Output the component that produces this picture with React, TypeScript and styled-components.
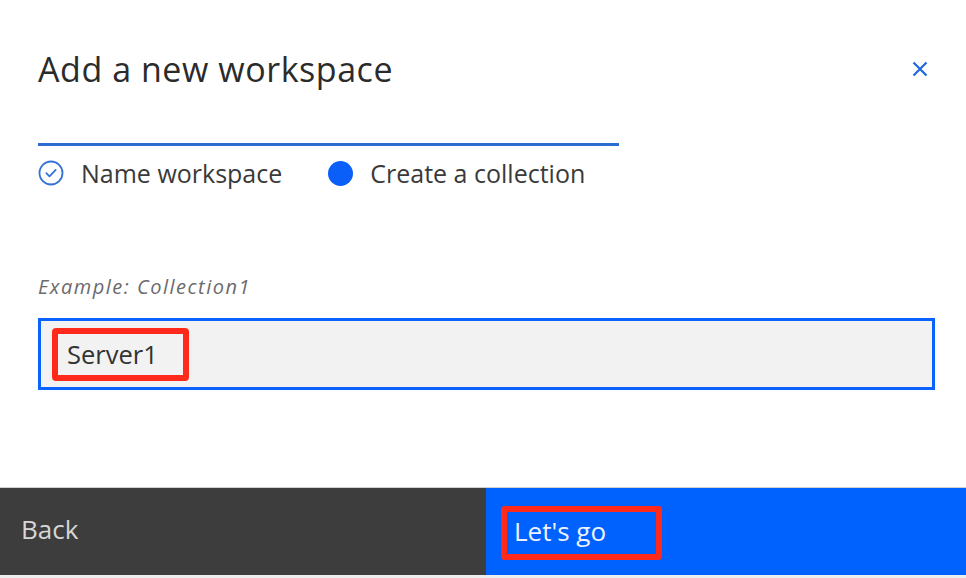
import React from "react";
import styled, { createGlobalStyle } from "styled-components";

const Global = createGlobalStyle`
  html, body { margin: 0; padding: 0; background: #ffffff; }
  body { font-family: "Open Sans", "Noto Sans", sans-serif; }
`;

const Modal = styled.div`
  width: 966px;
  height: 578px;
  display: flex;
  flex-direction: column;
  background: #ffffff;
  overflow: hidden;
`;

const Header = styled.header`
  height: 138px;
  padding: 0 38px;
  display: flex;
  align-items: center;
  justify-content: space-between;
  box-sizing: border-box;
`;

const Title = styled.h2`
  margin: 0;
  font-size: 34px;
  font-weight: 400;
  color: #2b2b2b;
  letter-spacing: 0.55px;
`;

const CloseButton = styled.button`
  border: 0;
  background: transparent;
  padding: 0;
  margin-right: -1px;
  width: 18px;
  height: 18px;
  display: flex;
  align-items: center;
  justify-content: center;
  color: #1f66e0;
  cursor: pointer;
`;

const Body = styled.section`
  flex: 1;
  padding: 0 31px 0 38px;
  display: flex;
  flex-direction: column;
`;

const Progress = styled.div`
  width: 581px;
  display: flex;
  flex-direction: column;
  margin-top: 5px;
`;

const Track = styled.div`
  height: 3px;
  background: #2a6ccf;
`;

const Steps = styled.ol`
  list-style: none;
  margin: 13px 0 0;
  padding: 0;
  display: flex;
  gap: 46px;
`;

const Step = styled.li`
  display: flex;
  align-items: center;
  gap: 17px;
  font-size: 25px;
  color: #3a3a3a;
  height: 28px;
`;

const Dot = styled.span`
  width: 25px;
  height: 25px;
  border-radius: 50%;
  background: #0a5ff8;
  display: block;
`;

const Field = styled.div`
  margin-top: 86px;
  display: flex;
  flex-direction: column;
  gap: 18px;
`;

const Label = styled.label`
  font-size: 20px;
  font-style: italic;
  color: #6b6b6b;
  letter-spacing: 1.5px;
`;

const InputBox = styled.div`
  height: 72px;
  box-sizing: border-box;
  border: 3px solid #0a62ff;
  background: #f2f2f2;
  display: flex;
  align-items: center;
  padding-left: 11px;
`;

const Marked = styled.span<{ $pad: string }>`
  display: inline-flex;
  align-items: center;
  border: 6px solid #ff2a1c;
  border-radius: 4px;
  padding: ${(p) => p.$pad};
  box-sizing: border-box;
`;

const InputText = styled.span`
  font-size: 25.5px;
  color: #333333;
`;

const Footer = styled.footer`
  height: 91px;
  display: grid;
  grid-template-columns: 486px 1fr;
  border-top: 1px solid #cfcfcf;
  border-bottom: 3px solid #ededed;
  box-sizing: border-box;
`;

const FooterButton = styled.button<{ $primary?: boolean }>`
  border: 0;
  margin: 0;
  display: flex;
  align-items: center;
  padding: ${(p) => (p.$primary ? "2px 0 0 15px" : "0 0 5px 21px")};
  background: ${(p) => (p.$primary ? "#0062fe" : "#3d3d3d")};
  color: ${(p) => (p.$primary ? "#eef3ff" : "#d6d6d6")};
  font-family: "Open Sans", "Noto Sans", sans-serif;
  font-size: 26px;
  text-align: left;
  cursor: pointer;
`;

const CheckIcon = () => (
  <svg width="26" height="26" viewBox="0 0 26 26" fill="none">
    <circle cx="13" cy="13" r="11.5" stroke="#3572d6" strokeWidth="1.8" />
    <path d="M8.3 13.2l3.2 3.1 6.2-6.4" stroke="#3572d6" strokeWidth="1.8" strokeLinecap="round" strokeLinejoin="round" />
  </svg>
);

const CloseIcon = () => (
  <svg width="16" height="16" viewBox="0 0 16 16" fill="none">
    <path d="M1.5 1.5l13 13M14.5 1.5l-13 13" stroke="currentColor" strokeWidth="2.2" />
  </svg>
);

export default function App() {
  return (
    <>
      <Global />
      <Modal>
        <Header>
          <Title>Add a new workspace</Title>
          <CloseButton aria-label="Close">
            <CloseIcon />
          </CloseButton>
        </Header>
        <Body>
          <Progress>
            <Track />
            <Steps>
              <Step>
                <CheckIcon />
                Name workspace
              </Step>
              <Step>
                <Dot />
                Create a collection
              </Step>
            </Steps>
          </Progress>
          <Field>
            <Label>Example: Collection1</Label>
            <InputBox>
              <Marked $pad="3px 25px 4px 9px">
                <InputText>Server1</InputText>
              </Marked>
            </InputBox>
          </Field>
        </Body>
        <Footer>
          <FooterButton>Back</FooterButton>
          <FooterButton $primary>
            <Marked $pad="1px 50px 5px 7px">Let's go</Marked>
          </FooterButton>
        </Footer>
      </Modal>
    </>
  );
}
